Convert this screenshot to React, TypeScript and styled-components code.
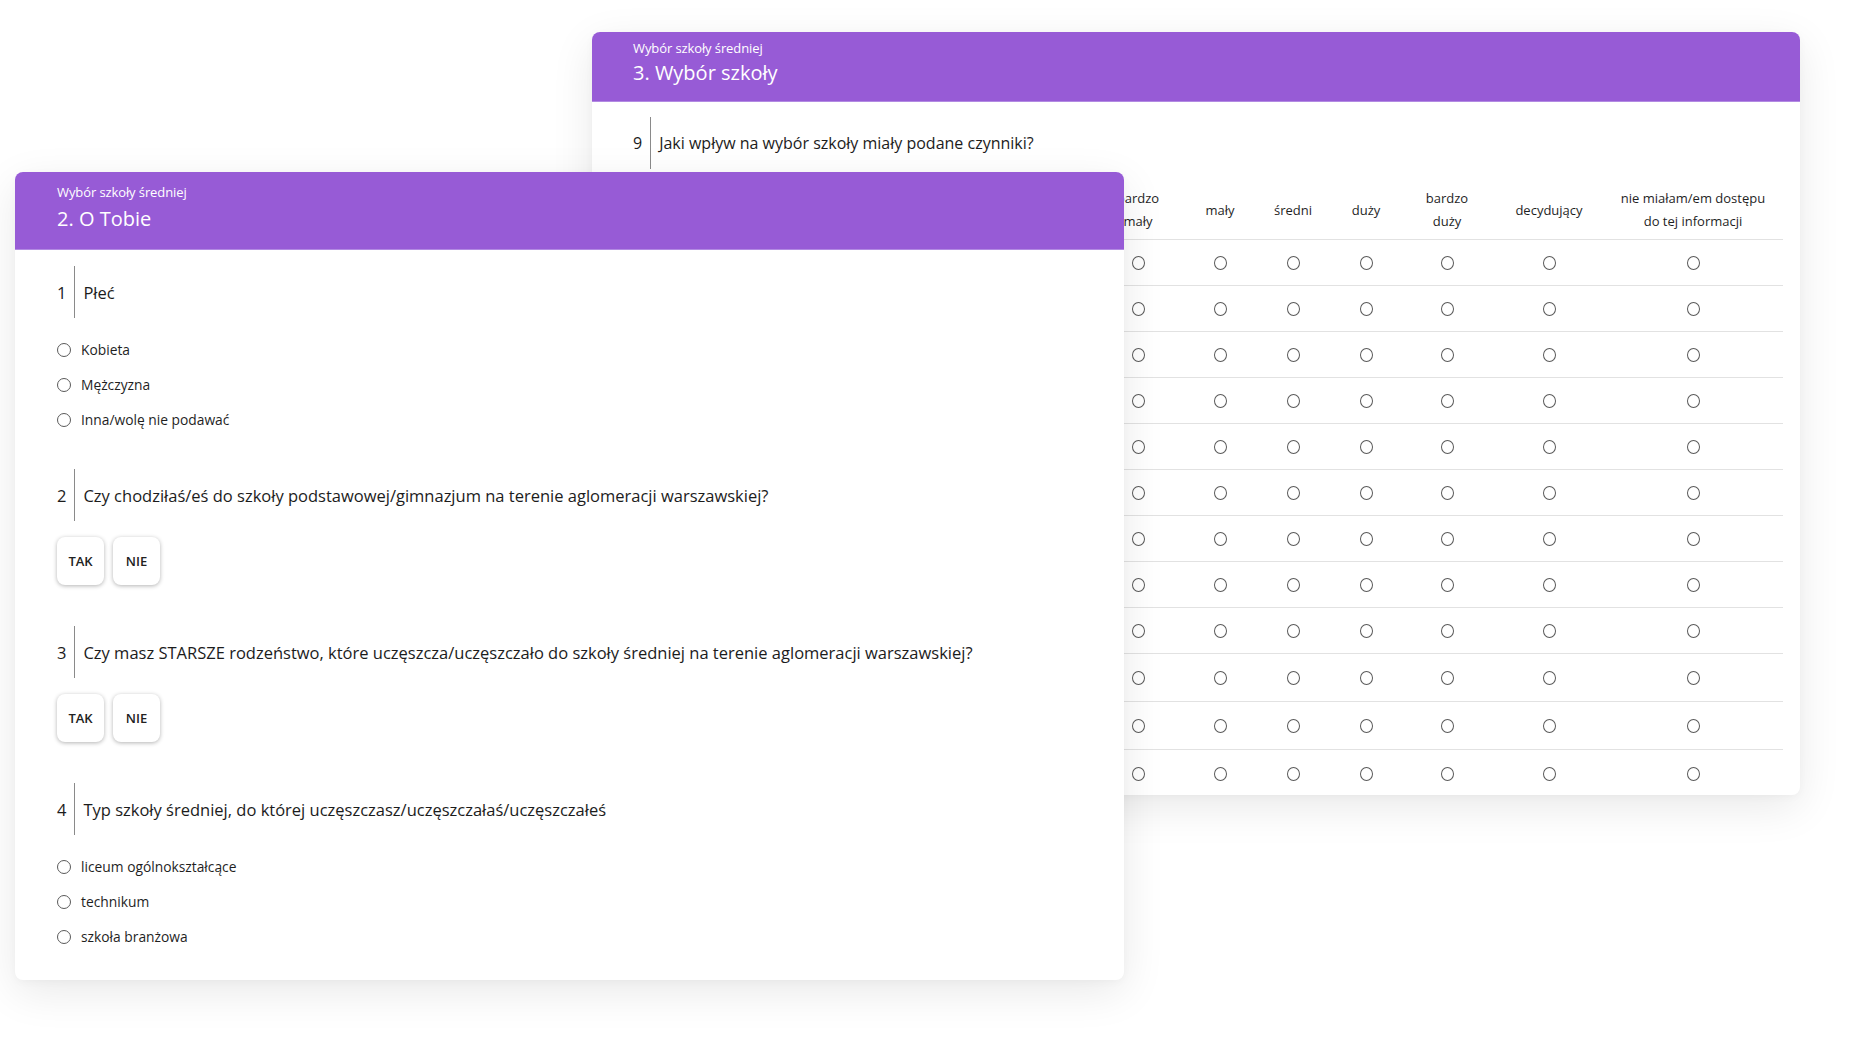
import React from "react";
import styled, { createGlobalStyle } from "styled-components";

const Global = createGlobalStyle`
  html, body { margin: 0; padding: 0; background: #ffffff; }
  body { font-family: "Open Sans", Lato, "Noto Sans", sans-serif; color: #222; }
  * { box-sizing: border-box; }
`;

const Stage = styled.div`
  position: relative;
  width: 1872px;
  height: 1044px;
  overflow: hidden;
  background: #ffffff;
`;

const Card = styled.section<{ $left: number; $top: number; $w: number; $h: number; $z: number }>`
  position: absolute;
  left: ${(p) => p.$left}px;
  top: ${(p) => p.$top}px;
  width: ${(p) => p.$w}px;
  height: ${(p) => p.$h}px;
  z-index: ${(p) => p.$z};
  background: #ffffff;
  border-radius: 8px;
  box-shadow: 0 12px 44px rgba(0, 0, 0, 0.09), 0 2px 8px rgba(0, 0, 0, 0.03);
  overflow: hidden;
  display: flex;
  flex-direction: column;
`;

const Header = styled.header<{ $h: number; $pad: number; $top: number; $gap: number }>`
  height: ${(p) => p.$h}px;
  background: #975bd6;
  border-bottom: 1px solid #b28ae2;
  color: #ffffff;
  padding-left: ${(p) => p.$pad}px;
  padding-top: ${(p) => p.$top}px;
  display: flex;
  flex-direction: column;
  gap: ${(p) => p.$gap}px;
  flex-shrink: 0;
`;

const Kicker = styled.div`
  font-size: 13px;
  line-height: 16px;
  letter-spacing: -0.1px;
`;

const Title = styled.h2`
  margin: 0;
  font-size: 20px;
  line-height: 24px;
  font-weight: 400;
`;

const Body = styled.div<{ $pad: number }>`
  padding-left: ${(p) => p.$pad}px;
  display: flex;
  flex-direction: column;
`;

const QHead = styled.div<{ $top: number; $size: number }>`
  margin-top: ${(p) => p.$top}px;
  height: 52px;
  display: flex;
  align-items: stretch;
  font-size: ${(p) => p.$size}px;
  color: #1c1c1c;
`;

const QNum = styled.div`
  display: flex;
  align-items: center;
  padding-right: 8px;
  border-right: 1px solid #8a8a8a;
`;

const QText = styled.div`
  display: flex;
  align-items: center;
  padding-left: 8px;
`;

const OptionList = styled.div`
  margin-top: 14px;
  margin-bottom: 32px;
  display: flex;
  flex-direction: column;
`;

const OptionRow = styled.label`
  height: 35px;
  display: flex;
  align-items: center;
  gap: 10px;
  font-size: 13.8px;
  font-weight: 500;
  color: #1f1f1f;
`;

const Radio = styled.span<{ $w: number; $h: number }>`
  display: inline-block;
  width: ${(p) => p.$w}px;
  height: ${(p) => p.$h}px;
  border-radius: 50%;
  border: 1.5px solid #5a5a5a;
  flex-shrink: 0;
`;

const ButtonRow = styled.div`
  margin-top: 16px;
  margin-bottom: 41px;
  display: flex;
  gap: 9px;
`;

const ChoiceButton = styled.button`
  width: 47px;
  height: 48px;
  border: none;
  background: #ffffff;
  border-radius: 8px;
  box-shadow: 0 1px 4px rgba(0, 0, 0, 0.3);
  font-family: inherit;
  font-size: 13px;
  font-weight: 600;
  color: #222;
  padding: 0;
`;

const Table = styled.div`
  margin-top: 12px;
  margin-right: 17px;
  display: grid;
  grid-template-columns: 467px 76px 88px 58px 88px 74px 130px 158px 1fr;
`;

const HeadCell = styled.div`
  height: 59px;
  display: flex;
  align-items: center;
  justify-content: center;
  text-align: center;
  font-size: 13px;
  line-height: 23px;
  color: #1f1f1f;
  border-bottom: 1px solid #e2e2e2;
`;

const Cell = styled.div<{ $h: number; $last: boolean }>`
  height: ${(p) => p.$h}px;
  display: flex;
  align-items: center;
  justify-content: center;
  border-bottom: ${(p) => (p.$last ? "none" : "1px solid #e2e2e2")};
`;

const columns = [
  "bardzo\nmały",
  "mały",
  "średni",
  "duży",
  "bardzo\nduży",
  "decydujący",
  "nie miałam/em dostępu\ndo tej informacji",
];

const rowHeights = [46, 46, 46, 46, 46, 46, 46, 46, 46, 48, 48, 48];

function QuestionHead({ n, text, top, size = 16.5 }: { n: number; text: string; top: number; size?: number }) {
  return (
    <QHead $top={top} $size={size}>
      <QNum>{n}</QNum>
      <QText>{text}</QText>
    </QHead>
  );
}

function Options({ items }: { items: string[] }) {
  return (
    <OptionList>
      {items.map((t) => (
        <OptionRow key={t}>
          <Radio $w={14} $h={14} />
          {t}
        </OptionRow>
      ))}
    </OptionList>
  );
}

function YesNo() {
  return (
    <ButtonRow>
      <ChoiceButton>TAK</ChoiceButton>
      <ChoiceButton>NIE</ChoiceButton>
    </ButtonRow>
  );
}

export default function App() {
  return (
    <>
      <Global />
      <Stage>
        <Card $left={592} $top={32} $w={1208} $h={763} $z={1}>
          <Header $h={70} $pad={41} $top={8} $gap={5}>
            <Kicker>Wybór szkoły średniej</Kicker>
            <Title>3. Wybór szkoły</Title>
          </Header>
          <Body $pad={41}>
            <QuestionHead n={9} text="Jaki wpływ na wybór szkoły miały podane czynniki?" top={15} size={16} />
            <Table>
              <HeadCell />
              {columns.map((c) => (
                <HeadCell key={c}>
                  <span>
                    {c.split("\n").map((l, i) => (
                      <React.Fragment key={l}>
                        {i > 0 && <br />}
                        {l}
                      </React.Fragment>
                    ))}
                  </span>
                </HeadCell>
              ))}
              <HeadCell />
              {rowHeights.map((h, r) => {
                const last = r === rowHeights.length - 1;
                return (
                  <React.Fragment key={r}>
                    <Cell $h={h} $last={last} />
                    {columns.map((c) => (
                      <Cell key={c} $h={h} $last={last}>
                        <Radio $w={13} $h={14} />
                      </Cell>
                    ))}
                    <Cell $h={h} $last={last} />
                  </React.Fragment>
                );
              })}
            </Table>
          </Body>
        </Card>

        <Card $left={15} $top={172} $w={1109} $h={808} $z={2}>
          <Header $h={78} $pad={42} $top={12} $gap={7}>
            <Kicker>Wybór szkoły średniej</Kicker>
            <Title>2. O Tobie</Title>
          </Header>
          <Body $pad={42}>
            <QuestionHead n={1} text="Płeć" top={16} />
            <Options items={["Kobieta", "Mężczyzna", "Inna/wolę nie podawać"]} />
            <QuestionHead
              n={2}
              text="Czy chodziłaś/eś do szkoły podstawowej/gimnazjum na terenie aglomeracji warszawskiej?"
              top={0}
            />
            <YesNo />
            <QuestionHead
              n={3}
              text="Czy masz STARSZE rodzeństwo, które uczęszcza/uczęszczało do szkoły średniej na terenie aglomeracji warszawskiej?"
              top={0}
            />
            <YesNo />
            <QuestionHead
              n={4}
              text="Typ szkoły średniej, do której uczęszczasz/uczęszczałaś/uczęszczałeś"
              top={0}
            />
            <Options items={["liceum ogólnokształcące", "technikum", "szkoła branżowa"]} />
          </Body>
        </Card>
      </Stage>
    </>
  );
}
